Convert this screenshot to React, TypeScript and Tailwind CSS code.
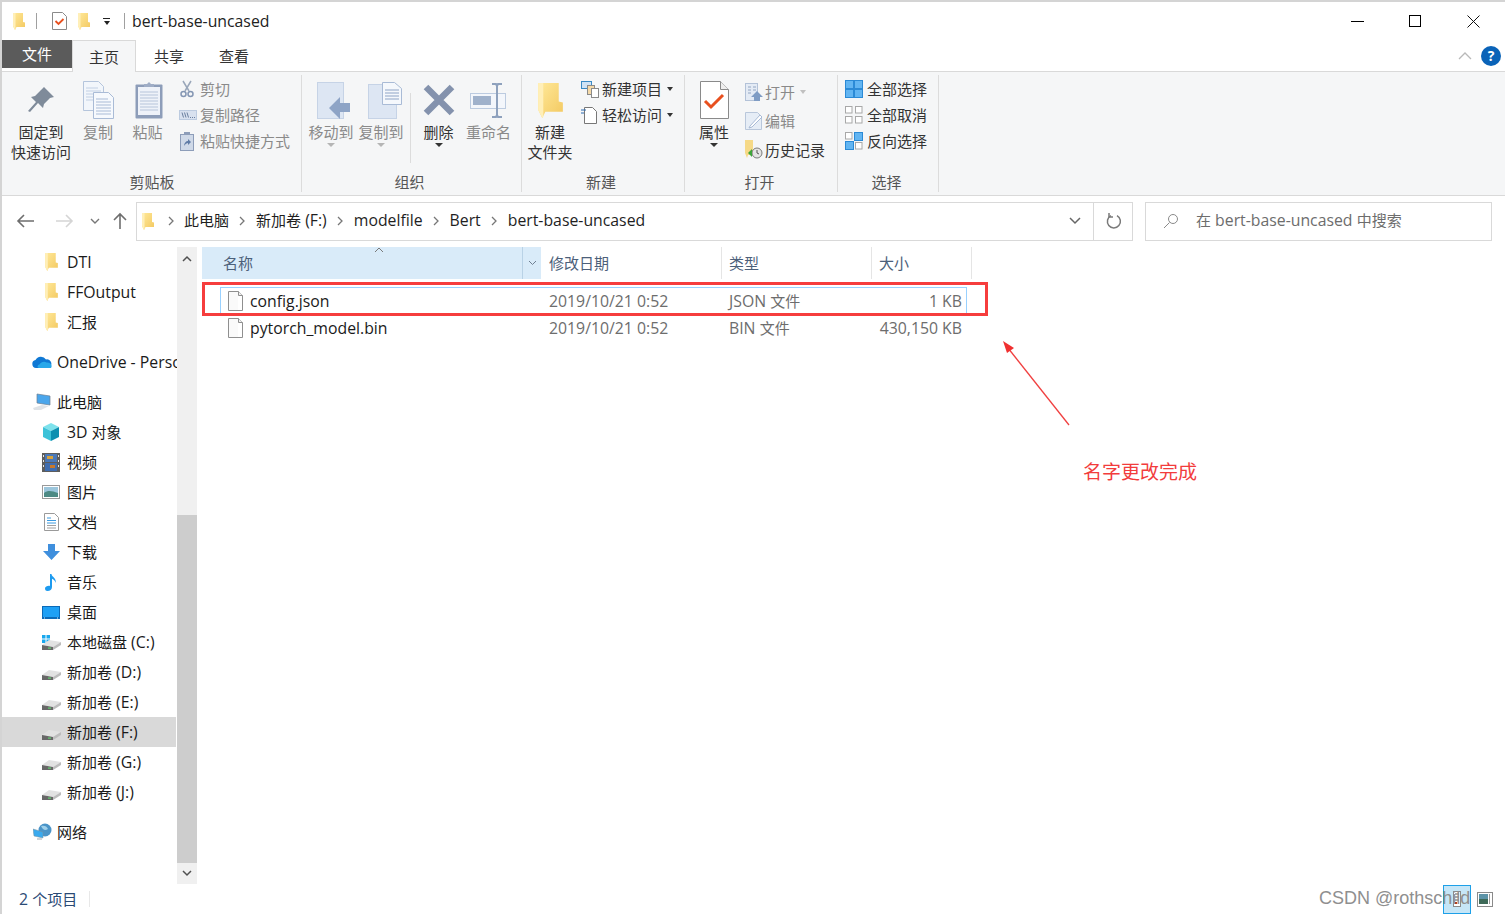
import { ReactNode } from "react";

// latin text sits a bit wider than the CJK at the same nominal size
const Mix = ({ t }: { t: string }) => (
  <>
    {t
      .split(/([\x00-\x7f]+)/)
      .filter(Boolean)
      .map((p, i) =>
        /^[\x00-\x7f]/.test(p) ? (
          <span key={i} className="text-[15.8px]">
            {p}
          </span>
        ) : (
          <span key={i}>{p}</span>
        ),
      )}
  </>
);

const Folder = ({ w = 13, h = 18 }: { w?: number; h?: number }) => (
  <svg width={w} height={h} viewBox="0 0 24 34" className="shrink-0">
    <defs>
      <linearGradient id="fold" x1="0" y1="0" x2="1" y2="1">
        <stop offset="0" stopColor="#ffe99a" />
        <stop offset="1" stopColor="#f3c85f" />
      </linearGradient>
    </defs>
    <path d="M0 0H20V18L24 19V28H7L4 34 0 26Z" fill="url(#fold)" />
    <path d="M0 0H5V33L4 34 0 26Z" fill="#ffefb8" />
  </svg>
);

const FileIcon = () => (
  <svg width="15" height="20" viewBox="0 0 15 20" className="shrink-0">
    <path d="M.5.5h10l4 4v15H.5z" fill="#fff" stroke="#8f8f8f" />
    <path d="M10.5.5v4h4" fill="#f0f0f0" stroke="#8f8f8f" />
    <path d="M1 1h9v18H1z" fill="#f7f7f7" opacity=".6" />
  </svg>
);

const Grid = ({ on }: { on: boolean[] }) => (
  <svg width="18" height="18" viewBox="0 0 18 18" className="shrink-0">
    {[0, 1, 2, 3].map((i) => {
      const x = i % 2 === 0 ? 0.5 : 10.5;
      const y = i < 2 ? 0.5 : 10.5;
      return on[i] ? (
        <rect key={i} x={i % 2 === 0 ? 0.5 : 9.5} y={i < 2 ? 0.5 : 9.5} width="8" height="8" fill="#62b5f2" stroke="#2b8ad6" />
      ) : (
        <rect key={i} x={x} y={y} width="6.5" height="6.5" fill="#fff" stroke="#a8a8a8" />
      );
    })}
  </svg>
);

const Drive = ({ win }: { win?: boolean }) => (
  <svg width="19" height="15" viewBox="0 0 19 15" className="shrink-0">
    {win && (
      <g fill="#19a8ee">
        <rect x="0" y="0" width="3.500" height="3.500" />
        <rect x="4.500" y="0" width="3.500" height="3.500" />
        <rect x="0" y="4.500" width="3.500" height="3.500" />
        <rect x="4.500" y="4.500" width="3.500" height="3.500" />
      </g>
    )}
    <path d="M0 10l7-5 12 2-8 5z" fill="#e2e2e2" />
    <path d="M11 12l8-5v3l-8 5z" fill="#bcbcbc" />
    <path d="M0 10l11 2v3H0z" fill="#686868" />
    <rect x="6" y="12.500" width="3" height="1.200" fill="#62d06f" />
  </svg>
);

const navIcons: Record<string, ReactNode> = {
  folder: <Folder />,
  cloud: (
    <svg width="20" height="12" viewBox="0 0 20 12">
      <path d="M4 12a4 4 0 0 1-.5-7.900A6 6 0 0 1 14 3.500 4.200 4.200 0 0 1 16 12z" fill="#0f78d4" />
      <path d="M7 12c-2 0-2-3 .5-3.500C9 6 12 5 14.500 6.500 18 6 21 9 19 12z" fill="#28a8ea" />
    </svg>
  ),
  pc: (
    <svg width="20" height="18" viewBox="0 0 20 18">
      <path d="M5 1l13 2v9L5 10z" fill="#4aa6ec" stroke="#6d7f92" strokeWidth=".7" />
      <path d="M1 15l9-3 7 1-8 4H2z" fill="#dfe3e7" />
    </svg>
  ),
  cube: (
    <svg width="18" height="18" viewBox="0 0 18 18">
      <path d="M9 0l8 4-8 4-8-4z" fill="#7ee2ec" />
      <path d="M1 4l8 4v10l-8-4z" fill="#3cc2d8" />
      <path d="M17 4L9 8v10l8-4z" fill="#0d8fb0" />
    </svg>
  ),
  film: (
    <svg width="18" height="19" viewBox="0 0 18 19">
      <rect width="18" height="19" fill="#5d5d5d" />
      <rect x="3" y="1" width="12" height="8" fill="#4a78b8" />
      <rect x="3" y="10" width="12" height="8" fill="#3f6db0" />
      <rect x="5" y="3" width="6" height="3" fill="#d8a23a" />
      <rect x="8" y="12" width="5" height="3" fill="#c8782a" />
      <g fill="#e8e8e8">
        <rect x="1" y="2" width="1" height="2" />
        <rect x="1" y="7" width="1" height="2" />
        <rect x="1" y="12" width="1" height="2" />
        <rect x="16" y="2" width="1" height="2" />
        <rect x="16" y="7" width="1" height="2" />
        <rect x="16" y="12" width="1" height="2" />
      </g>
    </svg>
  ),
  picture: (
    <svg width="18" height="14" viewBox="0 0 18 14">
      <rect x=".5" y=".5" width="17" height="13" fill="#fff" stroke="#9a9a9a" />
      <rect x="2" y="2" width="14" height="10" fill="#9cc6dc" />
      <path d="M2 8c4-3 8-2 14 0v4H2z" fill="#4d8a84" />
    </svg>
  ),
  doc: (
    <svg width="15" height="18" viewBox="0 0 15 18">
      <path d="M.5.5h10l4 4v13H.5z" fill="#fff" stroke="#9a9a9a" />
      <path d="M3 5h4M3 7.500h9M3 10h9" stroke="#3b9ae0" />
      <path d="M3 12.500h9M3 15h9" stroke="#a0a0a0" />
    </svg>
  ),
  down: (
    <svg width="17" height="16" viewBox="0 0 17 16">
      <path d="M5 0h7v7h5l-8.500 9L0 7h5z" fill="#3f8fdd" />
    </svg>
  ),
  music: (
    <svg width="12" height="17" viewBox="0 0 12 17">
      <path d="M5 0h1.500c0 3 5.500 4 4 9-.3-3-2.500-4-3.500-4.300V13c0 2.500-2 4-4.500 4C.5 17 0 15.500 0 14.500 0 12.500 3 11.500 5 12z" fill="#1d9bf0" />
    </svg>
  ),
  desktop: (
    <svg width="18" height="13" viewBox="0 0 18 13">
      <rect width="18" height="13" fill="#0b6ab8" />
      <rect x="1" y="1" width="16" height="10" fill="#1ea0f5" />
      <path d="M2 12h1M15 12h1" stroke="#cfe8fa" />
    </svg>
  ),
  driveC: <Drive win />,
  drive: <Drive />,
  network: (
    <svg width="19" height="18" viewBox="0 0 19 18">
      <circle cx="12" cy="7" r="6.500" fill="#4a94c8" />
      <path d="M8 3c3-1 6 0 7 3-3 2-5 1-7-3z" fill="#9fd0ea" />
      <path d="M0 6l10 3v6L1 13z" fill="#39a9ee" stroke="#78909f" strokeWidth=".5" />
      <rect x="4" y="15" width="5" height="2" fill="#cfd4d8" />
    </svg>
  ),
};

type NavRow = { label: string; icon: string; level: 0 | 1; gap?: boolean; active?: boolean };

const navRows: NavRow[] = [
  { label: "DTI", icon: "folder", level: 1 },
  { label: "FFOutput", icon: "folder", level: 1 },
  { label: "汇报", icon: "folder", level: 1 },
  { label: "OneDrive - Personal", icon: "cloud", level: 0, gap: true },
  { label: "此电脑", icon: "pc", level: 0, gap: true },
  { label: "3D 对象", icon: "cube", level: 1 },
  { label: "视频", icon: "film", level: 1 },
  { label: "图片", icon: "picture", level: 1 },
  { label: "文档", icon: "doc", level: 1 },
  { label: "下载", icon: "down", level: 1 },
  { label: "音乐", icon: "music", level: 1 },
  { label: "桌面", icon: "desktop", level: 1 },
  { label: "本地磁盘 (C:)", icon: "driveC", level: 1 },
  { label: "新加卷 (D:)", icon: "drive", level: 1 },
  { label: "新加卷 (E:)", icon: "drive", level: 1 },
  { label: "新加卷 (F:)", icon: "drive", level: 1, active: true },
  { label: "新加卷 (G:)", icon: "drive", level: 1 },
  { label: "新加卷 (J:)", icon: "drive", level: 1 },
  { label: "网络", icon: "network", level: 0, gap: true },
];

const files = [
  { name: "config.json", type: "JSON 文件", size: "1 KB", selected: true },
  { name: "pytorch_model.bin", type: "BIN 文件", size: "430,150 KB", selected: false },
];

const Big = ({
  w,
  icon,
  lines,
  dim,
  caret,
}: {
  w: string;
  icon: ReactNode;
  lines: string[];
  dim?: boolean;
  caret?: "dark" | "light";
}) => (
  <div className={`${w} shrink-0 flex flex-col items-center pt-[8px]`}>
    <div className="h-[40px] flex items-center justify-center">{icon}</div>
    <div className={`mt-[2px] leading-[20px] text-center whitespace-nowrap ${dim ? "text-[#8a8a8a]" : "text-[#333]"}`}>
      {lines.map((l) => (
        <div key={l}>{l}</div>
      ))}
    </div>
    {caret === "dark" && <div className="mt-[1px] w-0 h-0 border-x-[4px] border-x-transparent border-t-[4px] border-t-[#333]" />}
    {caret === "light" && <div className="mt-[1px] w-0 h-0 border-x-[4px] border-x-transparent border-t-[4px] border-t-[#b5b5b5]" />}
  </div>
);

const Small = ({
  icon,
  label,
  dim,
  h,
  caret,
  iw = "w-[21px]",
}: {
  icon: ReactNode;
  label: string;
  dim?: boolean;
  h: string;
  caret?: "dark" | "light";
  iw?: string;
}) => (
  <div className={`${h} flex items-center whitespace-nowrap ${dim ? "text-[#8a8a8a]" : "text-[#333]"}`}>
    <div className={`${iw} shrink-0 flex items-center`}>{icon}</div>
    <span>{label}</span>
    {caret === "dark" && <div className="ml-[5px] w-0 h-0 border-x-[3.5px] border-x-transparent border-t-[4px] border-t-[#333]" />}
    {caret === "light" && <div className="ml-[5px] w-0 h-0 border-x-[3.5px] border-x-transparent border-t-[4px] border-t-[#c0c0c0]" />}
  </div>
);

const Group = ({ w, label, children, lp = "" }: { w: string; label: string; children: ReactNode; lp?: string }) => (
  <div className={`${w} shrink-0 h-full relative flex flex-col`}>
    <div className="h-[99px] flex">{children}</div>
    <div className={`h-[24px] text-center leading-[22px] text-[#555] ${lp}`}>{label}</div>
    <div className="absolute right-0 top-[3px] bottom-[3px] w-px bg-[#dcdcdc]" />
  </div>
);

const Chevron = () => (
  <svg width="8" height="10" viewBox="0 0 8 10" className="shrink-0 ml-[9px]">
    <path d="M2 1l4 4-4 4" fill="none" stroke="#777" strokeWidth="1.300" />
  </svg>
);

const Crumb = ({ t }: { t: string }) => (
  <span className="ml-[10px] -mt-[2px] text-[#1f1f1f] whitespace-nowrap">
    <Mix t={t} />
  </span>
);

export default function App() {
  return (
    <div className="relative w-[1505px] h-[914px] overflow-hidden bg-white border-l-2 border-t-2 border-[#d4d4d4] flex flex-col text-[15px] leading-[20px] text-[#1a1a1a] [font-family:'Open_Sans','Noto_Sans_CJK_SC',sans-serif]">
      {/* title bar */}
      <div className="h-[38px] shrink-0 flex items-center pl-[11px]">
        <Folder w={12} h={17} />
        <div className="ml-[11px] w-px h-[16px] bg-[#a0a0a0]" />
        <svg width="15" height="18" viewBox="0 0 15 18" className="ml-[15px]">
          <path d="M.5.5h10l4 4v13H.5z" fill="#fff" stroke="#8a8a8a" />
          <path d="M3.500 9l3 3 5-5" fill="none" stroke="#e8501f" strokeWidth="1.800" />
        </svg>
        <div className="ml-[11px]">
          <Folder w={12} h={17} />
        </div>
        <div className="ml-[13px] flex flex-col items-center">
          <div className="w-[7px] h-px bg-[#222] mb-[2px]" />
          <div className="w-0 h-0 border-x-[3.5px] border-x-transparent border-t-[4px] border-t-[#222]" />
        </div>
        <div className="ml-[14px] w-px h-[16px] bg-[#a0a0a0]" />
        <span className="ml-[7px] text-[#222]">
          <Mix t="bert-base-uncased" />
        </span>
        <div className="ml-auto flex pr-[2px]">
          <div className="w-[58px] flex justify-center items-center h-[38px]">
            <div className="w-[13px] h-px bg-black" />
          </div>
          <div className="w-[58px] flex justify-center items-center h-[38px]">
            <div className="w-[12px] h-[12px] border border-black" />
          </div>
          <div className="w-[59px] flex justify-center items-center h-[38px]">
            <svg width="13" height="13" viewBox="0 0 13 13">
              <path d="M.5.5l12 12M12.500.5l-12 12" stroke="#111" />
            </svg>
          </div>
        </div>
      </div>

      {/* tabs */}
      <div className="h-[32px] shrink-0 flex items-start relative">
        <div className="w-[70px] h-[28px] bg-[#5b5b5b] text-white flex items-center justify-center">文件</div>
        <div className="w-[64px] h-[32px] bg-[#f5f6f7] border border-b-0 border-[#d9d9d9] flex items-center justify-center text-[#333] relative z-10">主页</div>
        <div className="w-[66px] h-[31px] flex items-center justify-center text-[#333]">共享</div>
        <div className="w-[64px] h-[31px] flex items-center justify-center text-[#333]">查看</div>
        <div className="ml-auto pr-[4px] h-[31px] flex items-center">
          <svg width="14" height="8" viewBox="0 0 14 8" className="mr-[9px]">
            <path d="M1 7l6-6 6 6" fill="none" stroke="#b9b9b9" strokeWidth="1.300" />
          </svg>
          <div className="w-[20px] h-[20px] rounded-full bg-[#0a63b8] text-white flex items-center justify-center font-bold text-[14px] leading-none">?</div>
        </div>
        <div className="absolute left-0 right-0 bottom-0 h-px bg-[#d9d9d9]" />
      </div>

      {/* ribbon */}
      <div className="h-[124px] shrink-0 bg-[#f5f6f7] border-b border-[#d9d9d9] flex text-[#333]">
        <Group w="w-[300px]" label="剪贴板">
          <Big
            w="w-[78px]"
            lines={["固定到", "快速访问"]}
            icon={
              <svg width="27" height="28" viewBox="0 0 27 28">
                <path d="M16 1l10 10-4 1-6 6-1 4-5-5-8 9-2-1 8-9-5-5 4-1 6-6z" fill="#7f8b9a" />
              </svg>
            }
          />
          <Big
            w="w-[36px]"
            dim
            lines={["复制"]}
            icon={
              <svg width="31" height="38" viewBox="0 0 31 38">
                <path d="M.5.5h15l5 5v24H.5z" fill="#f2f6fb" stroke="#b5c5dc" />
                <path d="M3 7h12M3 10h15M3 13h15M3 16h15M3 19h15" stroke="#c2d0e4" />
                <path d="M10.500 11.500h15l5 5v21h-20z" fill="#f6f9fd" stroke="#a9bbd6" />
                <path d="M13 18h12M13 21h15M13 24h15M13 27h15M13 30h15M13 33h15" stroke="#a9bbd6" />
              </svg>
            }
          />
          <Big
            w="w-[63px]"
            dim
            lines={["粘贴"]}
            icon={
              <svg width="28" height="38" viewBox="0 0 28 38" className="ml-[2px]">
                <rect x=".5" y="3.500" width="27" height="34" rx="1" fill="#8d9db9" />
                <rect x="3" y="6" width="22" height="28" fill="#eef2f9" />
                <path d="M5 11h18M5 14h18M5 17h18M5 20h18M5 23h18M5 26h18M5 29h18" stroke="#b6c4da" />
                <path d="M9 6V3h3l2-2 2 2h3v3z" fill="#9fadc6" />
              </svg>
            }
          />
          <div className="pt-[4px] w-[120px] shrink-0">
            <Small
              h="h-[26px]"
              dim
              label="剪切"
              icon={
                <svg width="14" height="18" viewBox="0 0 14 18" className="ml-px">
                  <path d="M3 1l6 10M11 1L5 11" stroke="#9aa7ba" strokeWidth="1.500" fill="none" />
                  <circle cx="3.500" cy="14" r="2.500" fill="none" stroke="#8496b3" strokeWidth="1.500" />
                  <circle cx="10.500" cy="14" r="2.500" fill="none" stroke="#8496b3" strokeWidth="1.500" />
                </svg>
              }
            />
            <Small
              h="h-[26px]"
              dim
              label="复制路径"
              icon={
                <svg width="18" height="10" viewBox="0 0 18 10">
                  <rect x=".5" y=".5" width="17" height="9" fill="#d8e1ef" stroke="#bccbe0" />
                  <path d="M3 2.500l1.500 5M5.500 2.500l1.500 5M8 2.500l1.500 5" stroke="#6a7f9f" />
                  <path d="M11 7.500h1M13 7.500h1M15 7.500h1" stroke="#6a7f9f" />
                </svg>
              }
            />
            <Small
              h="h-[26px]"
              dim
              label="粘贴快捷方式"
              icon={
                <svg width="14" height="19" viewBox="0 0 14 19" className="ml-px">
                  <rect x=".5" y="2.500" width="13" height="16" fill="#cfd9e8" stroke="#8d9db9" />
                  <path d="M4 0h6v3H4z" fill="#8d9db9" />
                  <path d="M4 14c0-3 2-5 4-5V7l3 3-3 3v-2c-1 0-3 1-4 3z" fill="#5f7ba6" />
                </svg>
              }
            />
          </div>
        </Group>
        <Group w="w-[220px]" label="组织" lp="pr-[5px]">
          <div className="w-[4px] shrink-0" />
          <Big
            w="w-[50px]"
            dim
            caret="light"
            lines={["移动到"]}
            icon={
              <svg width="33" height="37" viewBox="0 0 33 37" className="ml-[4px]">
                <rect x=".5" y=".5" width="26" height="36" fill="#dde6f3" stroke="#c6d3e6" />
                <path d="M12 26l11-11v6h10v9H23v7z" fill="#8ea4c6" />
              </svg>
            }
          />
          <Big
            w="w-[50px]"
            dim
            caret="light"
            lines={["复制到"]}
            icon={
              <svg width="34" height="37" viewBox="0 0 34 37" className="ml-[8px]">
                <rect x=".5" y="2.500" width="28" height="34" fill="#dde6f3" stroke="#c6d3e6" />
                <path d="M14.500.500h12l7 6v16h-19z" fill="#f5f8fc" stroke="#a9bbd6" />
                <path d="M17 8h14M17 11h14M17 14h14M17 17h14" stroke="#8ea4c6" />
              </svg>
            }
          />
          <div className="w-px h-[70px] bg-[#dcdcdc] mt-[21px] ml-[4px]" />
          <Big
            w="w-[55px]"
            caret="dark"
            lines={["删除"]}
            icon={
              <svg width="32" height="32" viewBox="0 0 32 32">
                <path d="M3 3l26 26M29 3L3 29" stroke="#8492ad" strokeWidth="6.500" />
              </svg>
            }
          />
          <Big
            w="w-[45px]"
            dim
            lines={["重命名"]}
            icon={
              <svg width="37" height="35" viewBox="0 0 37 35">
                <rect x=".5" y="10.500" width="35" height="15" fill="#f3f6fb" stroke="#bccbe0" />
                <rect x="3" y="13" width="18" height="9" fill="#9fb1cb" />
                <path d="M22 1h4l1 2 1-2h4M22 34h4l1-2 1 2h4M27 3v29" stroke="#8ea1bd" strokeWidth="2" fill="none" />
              </svg>
            }
          />
        </Group>
        <Group w="w-[163px]" label="新建" lp="pr-[5px]">
          <Big w="w-[56px]" lines={["新建", "文件夹"]} icon={<Folder w={25} h={35} />} />
          <div className="pt-[4px] pl-[3px] shrink-0">
            <Small
              h="h-[26px]"
              caret="dark"
              label="新建项目"
              icon={
                <svg width="18" height="17" viewBox="0 0 18 17">
                  <rect x=".5" y=".5" width="10" height="7" fill="#cfe3f5" stroke="#3a8ac4" />
                  <rect x="6.500" y="4.500" width="7" height="9" fill="#f4d9a8" stroke="#8a8a8a" />
                  <rect x="10.500" y="7.500" width="7" height="9" fill="#fff" stroke="#8a8a8a" />
                </svg>
              }
            />
            <Small
              h="h-[26px]"
              caret="dark"
              label="轻松访问"
              icon={
                <svg width="16" height="17" viewBox="0 0 16 17">
                  <path d="M3.500.500h8l4 4v12h-12z" fill="#fff" stroke="#777" />
                  <path d="M0 3h5M0 6h3" stroke="#2c6ab0" />
                </svg>
              }
            />
          </div>
        </Group>
        <Group w="w-[153px]" label="打开" lp="pr-[4px]">
          <Big
            w="w-[58px]"
            caret="dark"
            lines={["属性"]}
            icon={
              <svg width="29" height="38" viewBox="0 0 29 38">
                <path d="M.5.5h20l8 8v29H.5z" fill="#fff" stroke="#8a8a8a" />
                <path d="M20.500.500v8h8" fill="#eee" stroke="#8a8a8a" />
                <path d="M5 20l6 6 12-12" fill="none" stroke="#e8501f" strokeWidth="3" />
              </svg>
            }
          />
          <div className="pt-[5px] pl-[2px] shrink-0">
            <Small
              h="h-[29px]"
              iw="w-[20px]"
              dim
              caret="light"
              label="打开"
              icon={
                <svg width="18" height="18" viewBox="0 0 18 18">
                  <rect x=".5" y=".5" width="12" height="17" fill="#e4ebf5" stroke="#b3c2d8" />
                  <path d="M3 4h3M3 7h3M3 10h3M8 4h3M8 7h3" stroke="#93a6c2" />
                  <path d="M6 14l6-6 6 6h-3v4H9v-4z" fill="#7f9cc4" />
                </svg>
              }
            />
            <Small
              h="h-[29px]"
              iw="w-[20px]"
              dim
              label="编辑"
              icon={
                <svg width="18" height="18" viewBox="0 0 18 18">
                  <path d="M.5.5h12l4 4v13H.5z" fill="#e6edf6" stroke="#b9c7db" />
                  <path d="M5 14L15 3l2 2L7 15l-3 1z" fill="#fff" stroke="#a9bbd6" />
                </svg>
              }
            />
            <Small
              h="h-[29px]"
              iw="w-[20px]"
              label="历史记录"
              icon={
                <svg width="18" height="19" viewBox="0 0 18 19">
                  <path d="M0 0h8v9l3 1v5H3l-1 3-2-5z" fill="#f6d987" />
                  <circle cx="12" cy="13" r="5" fill="#e4e4e4" stroke="#7a7a7a" />
                  <path d="M12 10v3l2 1" stroke="#555" fill="none" />
                  <path d="M3 13l4-4v8z" fill="#3da53a" />
                </svg>
              }
            />
          </div>
        </Group>
        <Group w="w-[101px]" label="选择" lp="pr-[4px]">
          <div className="pl-[7px] pt-[4px] shrink-0">
            <Small h="h-[26px]" iw="w-[22px]" label="全部选择" icon={<Grid on={[true, true, true, true]} />} />
            <Small h="h-[26px]" iw="w-[22px]" label="全部取消" icon={<Grid on={[false, false, false, false]} />} />
            <Small h="h-[26px]" iw="w-[22px]" label="反向选择" icon={<Grid on={[false, true, true, false]} />} />
          </div>
        </Group>
      </div>

      {/* address row */}
      <div className="h-[50px] shrink-0 flex items-center pl-[13px]">
        <svg width="22" height="16" viewBox="0 0 22 16">
          <path d="M19 8H3M9 2L3 8l6 6" fill="none" stroke="#6e6e6e" strokeWidth="1.600" />
        </svg>
        <svg width="22" height="16" viewBox="0 0 22 16" className="ml-[16px]">
          <path d="M3 8h16M13 2l6 6-6 6" fill="none" stroke="#d5d5d5" strokeWidth="1.600" />
        </svg>
        <svg width="16" height="8" viewBox="0 0 16 8" className="ml-[12px]">
          <path d="M4 2l4 4 4-4" fill="none" stroke="#777" strokeWidth="1.400" />
        </svg>
        <svg width="20" height="18" viewBox="0 0 20 18" className="ml-[7px]">
          <path d="M10 17V2M4 8l6-6 6 6" fill="none" stroke="#6e6e6e" strokeWidth="1.600" />
        </svg>
        <div className="ml-[6px] w-[997px] h-[39px] border border-[#d9d9d9] flex items-center pl-[5px]">
          <Folder w={12} h={17} />
          <div className="ml-[4px]"><Chevron /></div>
          <span className="ml-[9px] -mt-[2px] text-[#1f1f1f] whitespace-nowrap">此电脑</span>
          <Chevron />
          <Crumb t="新加卷 (F:)" />
          <Chevron />
          <Crumb t="modelfile" />
          <Chevron />
          <Crumb t="Bert" />
          <Chevron />
          <Crumb t="bert-base-uncased" />
          <div className="ml-auto h-full flex items-center">
            <svg width="14" height="8" viewBox="0 0 14 8" className="mr-[11px]">
              <path d="M2 1l5 5 5-5" fill="none" stroke="#666" strokeWidth="1.500" />
            </svg>
            <div className="w-[39px] h-full border-l border-[#d9d9d9] flex items-center justify-center pl-px">
              <svg width="16" height="16" viewBox="0 0 16 16">
                <path d="M5 2.600A6.500 6.500 0 1 0 11 2.700" fill="none" stroke="#7a7a7a" strokeWidth="1.500" />
                <path d="M3 0v4h4" fill="none" stroke="#7a7a7a" strokeWidth="1.500" />
              </svg>
            </div>
          </div>
        </div>
        <div className="ml-[12px] w-[347px] h-[39px] border border-[#d9d9d9] flex items-center pl-[17px] text-[#6d6d6d]">
          <svg width="16" height="16" viewBox="0 0 16 16">
            <circle cx="10" cy="6" r="4.500" fill="none" stroke="#8a8a8a" />
            <path d="M6.500 9.500L1 15" stroke="#8a8a8a" />
          </svg>
          <span className="ml-[17px] -mt-[2px] whitespace-nowrap">
            <Mix t="在 bert-base-uncased 中搜索" />
          </span>
        </div>
      </div>

      {/* main */}
      <div className="flex-1 min-h-0 flex">
        <div className="w-[175px] shrink-0 pt-px overflow-hidden">
          {navRows.map((r) => (
            <div
              key={r.label}
              className={`h-[30px] flex items-center whitespace-nowrap ${r.gap ? "mt-[10px]" : ""} ${r.active ? "bg-[#d9d9d9] mr-px" : ""} ${r.level === 1 ? "pl-[39px]" : "pl-[30px]"}`}
            >
              <div className="w-[20px] shrink-0 flex items-center justify-center">{navIcons[r.icon]}</div>
              <span className={r.level === 1 ? "ml-[6px]" : "ml-[5px]"}>
                <Mix t={r.label} />
              </span>
            </div>
          ))}
        </div>
        <div className="w-[20px] shrink-0 mt-px flex flex-col bg-[#f0f0f0]">
          <div className="h-[23px] flex items-center justify-center">
            <svg width="10" height="7" viewBox="0 0 10 7">
              <path d="M1 6l4-4 4 4" fill="none" stroke="#505050" strokeWidth="1.500" />
            </svg>
          </div>
          <div className="h-[245px]" />
          <div className="h-[348px] bg-[#cdcdcd]" />
          <div className="h-[21px] flex items-center justify-center">
            <svg width="10" height="7" viewBox="0 0 10 7">
              <path d="M1 1l4 4 4-4" fill="none" stroke="#505050" strokeWidth="1.500" />
            </svg>
          </div>
        </div>
        <div className="flex-1 pl-[5px] pt-px">
          <div className="h-[32px] flex text-[#4c607a] relative">
            <div className="w-[339px] bg-[#d9ebf9] flex">
              <div className="w-[320px] pl-[21px] flex items-center">名称</div>
              <div className="w-[19px] border-l border-[#b9d2e6] flex items-center justify-center">
                <svg width="9" height="6" viewBox="0 0 9 6">
                  <path d="M1 1l3.500 3.500L8 1" fill="none" stroke="#6f7f92" />
                </svg>
              </div>
            </div>
            <div className="w-[181px] pl-[8px] flex items-center border-r border-[#e5e5e5]">修改日期</div>
            <div className="w-[150px] pl-[7px] flex items-center border-r border-[#e5e5e5]">类型</div>
            <div className="w-[100px] pl-[7px] flex items-center border-r border-[#e5e5e5]">大小</div>
            <svg width="10" height="6" viewBox="0 0 10 6" className="absolute left-[172px] top-0">
              <path d="M1 5l4-4 4 4" fill="none" stroke="#7a7a7a" />
            </svg>
          </div>
          <div className="mt-[8px] ml-[18px] w-[747px]">
            {files.map((f) => (
              <div
                key={f.name}
                className={`h-[27px] border pl-[7px] pr-[4px] flex items-center ${f.selected ? "border-[#99d1ff]" : "border-transparent"}`}
              >
                <div className="w-[321px] flex items-center text-[#1a1a1a]">
                  <FileIcon />
                  <span className="ml-[7px]">
                    <Mix t={f.name} />
                  </span>
                </div>
                <div className="w-[180px] text-[#6d6d6d]">
                  <Mix t="2019/10/21 0:52" />
                </div>
                <div className="w-[100px] text-[#6d6d6d]">
                  <Mix t={f.type} />
                </div>
                <div className="w-[133px] text-right text-[#6d6d6d]">
                  <Mix t={f.size} />
                </div>
              </div>
            ))}
          </div>
        </div>
      </div>

      {/* status bar */}
      <div className="h-[30px] shrink-0 flex items-center pl-[17px] text-[#2b4a75]">
        <span>
          <Mix t="2 个项目" />
        </span>
        <div className="ml-[12px] w-px h-[16px] bg-[#e8e8e8]" />
        <div className="ml-auto flex items-center pr-[12px]">
          <div className="w-[28px] h-[29px] border border-[#1ea0e8] bg-[#c6e6f7] flex items-center justify-center">
            <svg width="8" height="16" viewBox="0 0 8 16">
              <rect x=".5" y=".5" width="7" height="15" fill="#fff" stroke="#8a8a8a" />
              <path d="M2 3h4M2 6h4M2 9h4" stroke="#555" />
              <rect x="2" y="11" width="2" height="2" fill="#b5381c" />
            </svg>
          </div>
          <svg width="16" height="15" viewBox="0 0 16 15" className="ml-[6px]">
            <rect x=".5" y=".5" width="15" height="14" fill="#fff" stroke="#8a8a8a" />
            <rect x="2" y="2" width="9" height="5" fill="#5d94a8" />
            <rect x="2" y="7" width="9" height="5" fill="#3e6a58" />
            <path d="M12.500 2v10" stroke="#9a9a9a" />
          </svg>
        </div>
      </div>

      {/* annotation overlay */}
      <div className="absolute left-[200px] top-[280px] w-[786px] h-[34px] border-[3px] border-[#f63d3d]" />
      <svg width="80" height="96" viewBox="0 0 80 96" className="absolute left-[1000px] top-[338px]">
        <path d="M67 85L6 8" stroke="#f04040" strokeWidth="1.300" />
        <path d="M1 1l11 7-7 5z" fill="#f03030" />
      </svg>
      <div className="absolute left-[1081px] top-[456px] text-[19px] leading-[28px] text-[#f23c3c] whitespace-nowrap">名字更改完成</div>
      <div className="absolute left-[1317px] top-[884px] text-[18px] leading-[24px] text-[#8f8f8f] whitespace-nowrap [font-family:'Liberation_Sans',sans-serif]">CSDN @rothschild</div>
    </div>
  );
}
